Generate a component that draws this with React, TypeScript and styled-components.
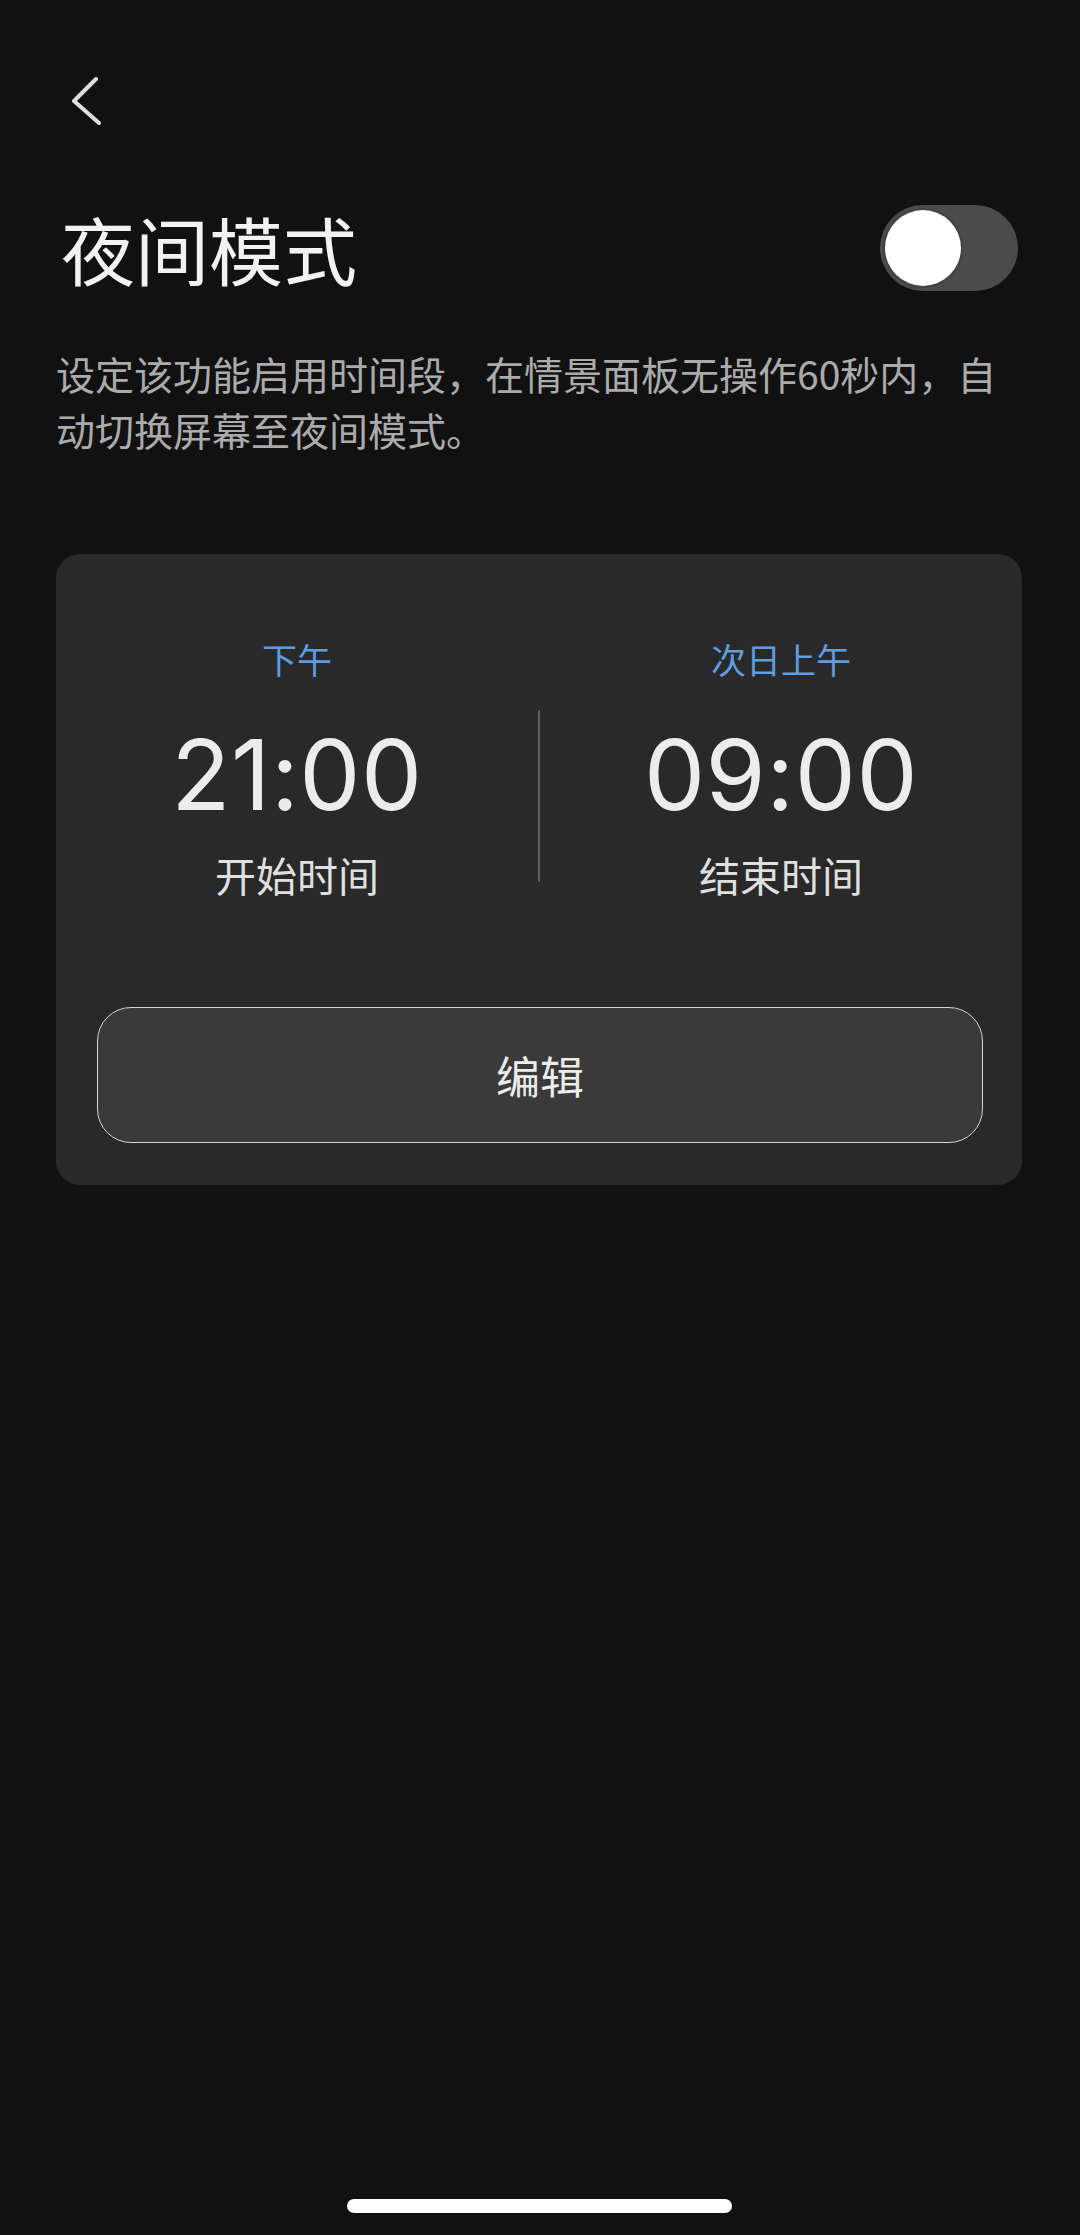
import React from "react";
import styled, { createGlobalStyle } from "styled-components";

const GlobalStyle = createGlobalStyle`
  html, body {
    margin: 0;
    padding: 0;
    background: #111111;
  }
  body {
    font-family: "Noto Sans CJK SC", "Noto Sans", sans-serif;
  }
`;

const Page = styled.div`
  width: 1080px;
  min-height: 2235px;
  box-sizing: border-box;
  background: #111111;
  display: flex;
  flex-direction: column;
  padding: 0 58px 0 56px;
`;

const TopBar = styled.div`
  height: 56px;
  margin-top: 72px;
  display: flex;
  align-items: center;
`;

const BackButton = styled.button`
  width: 44px;
  height: 56px;
  padding: 0;
  margin-left: 12px;
  border: none;
  background: transparent;
  display: flex;
  align-items: center;
  justify-content: flex-start;
`;

const TitleRow = styled.div`
  margin-top: 77px;
  height: 86px;
  display: flex;
  align-items: center;
  justify-content: space-between;
`;

const Title = styled.h1`
  margin: 0 0 0 5px;
  font-size: 74px;
  line-height: 86px;
  font-weight: 400;
  color: #f2f2f2;
  letter-spacing: 0;
`;

const Toggle = styled.div<{ $on: boolean }>`
  width: 138px;
  height: 86px;
  margin-right: 4px;
  box-sizing: border-box;
  border-radius: 43px;
  padding: 5px;
  background: ${(p) => (p.$on ? "#3b82f6" : "#4b4b4b")};
  display: flex;
  justify-content: ${(p) => (p.$on ? "flex-end" : "flex-start")};
`;

const Knob = styled.div`
  width: 76px;
  height: 76px;
  border-radius: 50%;
  background: #ffffff;
  box-shadow: 0 0 3px rgba(0, 0, 0, 0.5);
`;

const Description = styled.p`
  margin: 54px 0 0 0;
  font-size: 39px;
  line-height: 56px;
  color: #ababab;
  font-weight: 400;
`;

const Card = styled.section`
  margin-top: 97px;
  background: #292929;
  border-radius: 24px;
  padding: 81px 0 42px;
  display: flex;
  flex-direction: column;
`;

const TimeRow = styled.div`
  display: flex;
  align-items: flex-end;
`;

const TimeColumn = styled.div`
  flex: 1;
  display: flex;
  flex-direction: column;
  align-items: center;
`;

const Period = styled.div`
  font-size: 35px;
  line-height: 48px;
  color: #5d9de0;
`;

const Clock = styled.div`
  margin-top: 43px;
  font-family: Inter, Roboto, "Noto Sans", sans-serif;
  font-size: 97px;
  line-height: 97px;
  font-weight: 400;
  color: #ececec;
  letter-spacing: 0.5px;
`;

const Caption = styled.div`
  margin-top: 23px;
  font-size: 41px;
  line-height: 56px;
  color: #e0e0e0;
`;

const Divider = styled.div`
  width: 2px;
  height: 172px;
  margin-bottom: 20px;
  background: #5e5e5e;
`;

const EditButton = styled.button`
  margin: 105px 39px 0 41px;
  height: 136px;
  box-sizing: border-box;
  border: 1.5px solid #d4d4d4;
  border-radius: 34px;
  background: #3a3a3a;
  color: #ececec;
  font-family: "Noto Sans CJK SC", "Noto Sans", sans-serif;
  font-size: 44px;
  font-weight: 400;
  display: flex;
  align-items: center;
  justify-content: center;
  padding: 0;
`;

const HomeIndicator = styled.div`
  margin: auto auto 22px;
  width: 385px;
  height: 14px;
  border-radius: 7px;
  background: #ffffff;
`;

const ChevronLeft = () => (
  <svg width="36" height="50" viewBox="0 0 36 50" fill="none">
    <path
      d="M28 4 L6 26 L31 48"
      stroke="#dedede"
      strokeWidth="4"
      strokeLinecap="round"
      strokeLinejoin="round"
    />
  </svg>
);

export default function App() {
  return (
    <>
      <GlobalStyle />
      <Page>
        <TopBar>
          <BackButton aria-label="返回">
            <ChevronLeft />
          </BackButton>
        </TopBar>
        <TitleRow>
          <Title>夜间模式</Title>
          <Toggle $on={false}>
            <Knob />
          </Toggle>
        </TitleRow>
        <Description>
          设定该功能启用时间段，在情景面板无操作60秒内，自动切换屏幕至夜间模式。
        </Description>
        <Card>
          <TimeRow>
            <TimeColumn>
              <Period>下午</Period>
              <Clock>21:00</Clock>
              <Caption>开始时间</Caption>
            </TimeColumn>
            <Divider />
            <TimeColumn>
              <Period>次日上午</Period>
              <Clock>09:00</Clock>
              <Caption>结束时间</Caption>
            </TimeColumn>
          </TimeRow>
          <EditButton>编辑</EditButton>
        </Card>
        <HomeIndicator />
      </Page>
    </>
  );
}
